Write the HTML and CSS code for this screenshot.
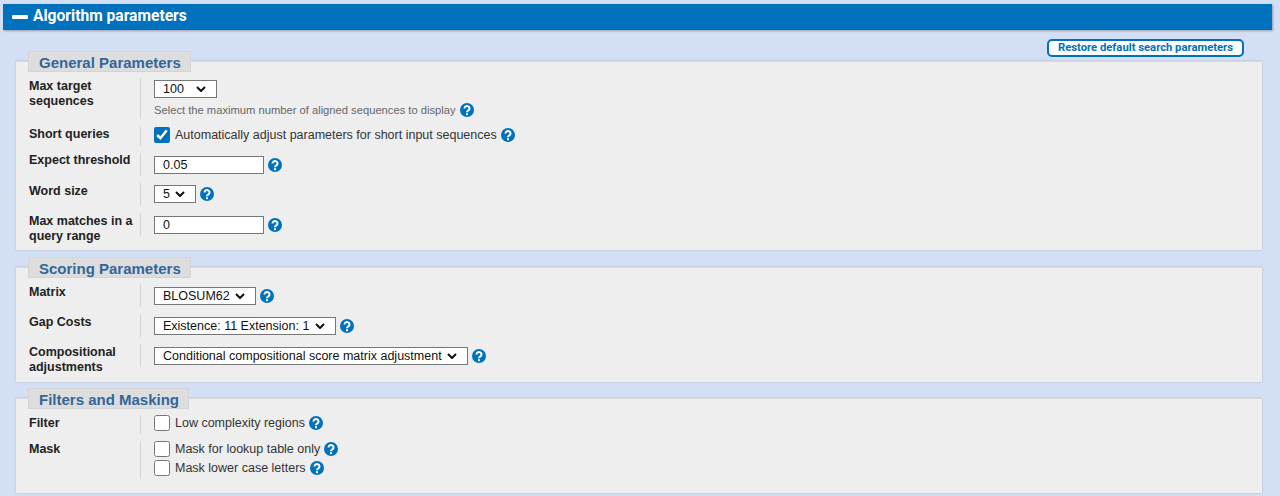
FILE: index.html
```html
<!DOCTYPE html>
<html lang="en">
<head>
<meta charset="utf-8">
<title>Algorithm parameters</title>
<link rel="stylesheet" href="styles.css">
</head>
<body>
<svg class="defs" width="0" height="0" aria-hidden="true">
  <symbol id="help" viewBox="0 0 14 14">
    <circle cx="7" cy="7" r="7" fill="#0071bc"/>
    <path d="M4.5 5.4a2.5 2.3 0 1 1 3.9 1.9c-.9.6-1.4 1-1.4 2" fill="none" stroke="#fff" stroke-width="2"/>
    <rect x="6" y="10.2" width="2" height="2" fill="#fff"/>
  </symbol>
</svg>
<header class="bar"><span class="minus"></span><h1>Algorithm parameters</h1></header>
<main class="panel">
  <div class="restore-row"><button class="restore" type="button">Restore default search parameters</button></div>
  <fieldset class="group group-general">
    <legend>General Parameters</legend>
    <div class="row row-target">
      <div class="label">Max target sequences</div>
      <div class="control">
        <div class="line first"><select class="sel-100"><option>100</option><option>1000</option></select></div>
        <div class="hint">Select the maximum number of aligned sequences to display <svg class="help"><use href="#help"/></svg></div>
      </div>
    </div>
    <div class="row row-short">
      <div class="label tight">Short queries</div>
      <div class="control"><label class="check"><input type="checkbox" checked><span>Automatically adjust parameters for short input sequences</span><svg class="help"><use href="#help"/></svg></label></div>
    </div>
    <div class="row row-single">
      <div class="label tight">Expect threshold</div>
      <div class="control line"><input class="num" type="text" value="0.05"><svg class="help"><use href="#help"/></svg></div>
    </div>
    <div class="row row-single">
      <div class="label">Word size</div>
      <div class="control line lift"><select><option>5</option><option>6</option></select><svg class="help"><use href="#help"/></svg></div>
    </div>
    <div class="row row-single">
      <div class="label">Max matches in a query range</div>
      <div class="control line"><input class="num" type="text" value="0"><svg class="help"><use href="#help"/></svg></div>
    </div>
  </fieldset>
  <fieldset class="group group-scoring">
    <legend>Scoring Parameters</legend>
    <div class="row row-single">
      <div class="label">Matrix</div>
      <div class="control line"><select><option>BLOSUM62</option></select><svg class="help"><use href="#help"/></svg></div>
    </div>
    <div class="row row-single">
      <div class="label">Gap Costs</div>
      <div class="control line"><select><option>Existence: 11 Extension: 1</option></select><svg class="help"><use href="#help"/></svg></div>
    </div>
    <div class="row row-single">
      <div class="label">Compositional adjustments</div>
      <div class="control line"><select><option>Conditional compositional score matrix adjustment</option></select><svg class="help"><use href="#help"/></svg></div>
    </div>
  </fieldset>
  <fieldset class="group group-filter">
    <legend>Filters and Masking</legend>
    <div class="row row-filter">
      <div class="label">Filter</div>
      <div class="control"><label class="check"><input type="checkbox"><span>Low complexity regions</span><svg class="help"><use href="#help"/></svg></label></div>
    </div>
    <div class="row row-mask">
      <div class="label">Mask</div>
      <div class="control stack">
        <label class="check"><input type="checkbox"><span>Mask for lookup table only</span><svg class="help"><use href="#help"/></svg></label>
        <label class="check"><input type="checkbox"><span>Mask lower case letters</span><svg class="help"><use href="#help"/></svg></label>
      </div>
    </div>
  </fieldset>
</main>
</body>
</html>
```
FILE: styles.css
```css
* { box-sizing: border-box; }
html, body { margin: 0; height: 496px; overflow: hidden; }
body {
  background: #d3dff5;
  padding: 4px 8px 0 3px;
  font-family: "Liberation Sans", Arial, sans-serif;
  font-size: 12.5px;
  color: #222;
}
.defs { position: absolute; }
.bar {
  height: 26px;
  background: #0071bc;
  box-shadow: 1px 1px 2px #99a;
  display: flex;
  align-items: center;
  padding-left: 9px;
  gap: 5px;
}
.minus { width: 16px; height: 4px; background: #fff; border-radius: 1px; }
.bar h1 {
  margin: 0;
  color: #fff;
  font: 700 15.6px/1 Roboto, sans-serif;
}
.panel { padding: 9px 10px 0 13px; }
.restore-row { display: flex; justify-content: flex-end; height: 12px; padding-right: 18px; }
.restore {
  height: 18px;
  width: 197px;
  flex: none;
  padding: 0;
  border: 2px solid #0071bc;
  border-radius: 5px;
  background: #fff;
  color: #0071bc;
  font: 700 11.25px/1 Roboto, sans-serif;
}
.group {
  margin: 0 0 7px;
  padding: 6px 0 0 13px;
  min-width: 0;
  border: 0;
  border-top: 1px solid #d8d8d8;
  background: #eee;
  box-shadow: 0 0 2px #bbb;
  position: relative;
}
.group legend {
  padding: 0 0 0 10px;
  margin: 0 0 0 -1px;
  background: #ddd;
  border: 1px solid #d4d4d4;
  color: #336699;
  font: 700 15px/21px "Liberation Sans", Arial, sans-serif;
  height: 21px;
}
.group-general legend, .group-scoring legend { width: 163px; }
.group-filter legend { width: 161px; }
.group-general { height: 199px; }
.group-scoring { height: 125px; margin-bottom: 6px; }
.group-filter { height: 105px; margin: 0; }
.row { display: flex; margin-bottom: 7px; }
.label {
  width: 112px;
  flex: none;
  border-right: 1px solid #d4d4d4;
  padding: 1px 6px 0 0;
  font-weight: 700;
  line-height: 15px;
  color: #222;
}
.label.tight { padding-top: 0; }
.control { padding-left: 13px; min-width: 0; }
.line { display: flex; align-items: center; gap: 4px; }
.first { margin-top: 2px; }
.row-target { height: 41px; margin-bottom: 8px; }
.row-short { height: 19px; }
.row-single { height: 23px; margin-bottom: 7px; }
.row-filter { height: 19px; }
.row-mask { height: 38px; }
.row-single .control { height: 23px; }
.row-single .label { height: 23px; }
.row-single .control.lift { height: 21px; }
select {
  appearance: none;
  height: 18px;
  padding: 0 25px 0 8px;
  background: #fff url("data:image/svg+xml,%3Csvg xmlns='http://www.w3.org/2000/svg' width='10' height='6' viewBox='0 0 10 6'%3E%3Cpath d='M1 1l4 4 4-4' fill='none' stroke='%23111' stroke-width='2'/%3E%3C/svg%3E") no-repeat right 10px center;
  border: 1px solid #767676;
  border-radius: 0;
  font: 12.5px "Liberation Sans", Arial, sans-serif;
  color: #111;
}
.sel-100 { width: 63px; }
.num {
  width: 110px;
  height: 18px;
  padding: 0 8px;
  border: 1px solid #767676;
  border-radius: 0;
  background: #fff;
  font: 12.5px "Liberation Sans", Arial, sans-serif;
  color: #111;
}
.help { width: 14px; height: 14px; flex: none; }
.hint { margin-top: 5px; color: #666; font-size: 11.2px; display: flex; align-items: center; gap: 4px; }
.check { display: flex; align-items: center; gap: 5px; height: 16px; color: #333; }
.check input { width: 16px; height: 16px; margin: 0; accent-color: #0071bc; flex: none; }
.check .help { margin-left: -1px; }
.stack { display: flex; flex-direction: column; gap: 3px; }
```
